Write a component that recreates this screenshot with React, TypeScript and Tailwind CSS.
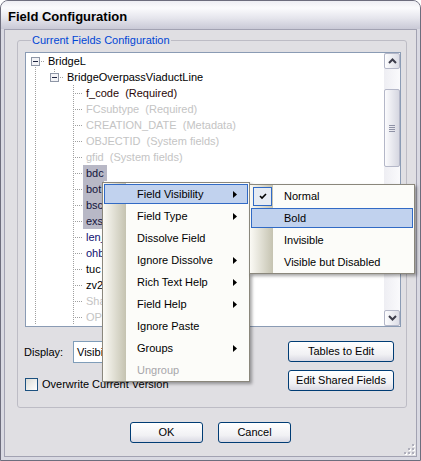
import clsx from "clsx";

type Cell = "none" | "v" | "tee" | "rootBox" | "box";

type TreeRow = {
  cells: Cell[];
  label: string;
  tone?: "plain" | "required" | "muted" | "field";
  selected?: boolean;
  focused?: boolean;
};

const LEAF: Cell[] = ["v", "none", "tee"];

const rows: TreeRow[] = [
  { cells: ["rootBox"], label: "BridgeL" },
  { cells: ["v", "box"], label: "BridgeOverpassViaductLine" },
  { cells: LEAF, label: "f_code  (Required)", tone: "required" },
  { cells: LEAF, label: "FCsubtype  (Required)", tone: "muted" },
  { cells: LEAF, label: "CREATION_DATE  (Metadata)", tone: "muted" },
  { cells: LEAF, label: "OBJECTID  (System fields)", tone: "muted" },
  { cells: LEAF, label: "gfid  (System fields)", tone: "muted" },
  { cells: LEAF, label: "bdc", selected: true },
  { cells: LEAF, label: "bot", selected: true },
  { cells: LEAF, label: "bsc", selected: true },
  { cells: LEAF, label: "exs", selected: true, focused: true },
  { cells: LEAF, label: "len_", tone: "field" },
  { cells: LEAF, label: "ohb", tone: "field" },
  { cells: LEAF, label: "tuc" },
  { cells: LEAF, label: "zv2" },
  { cells: LEAF, label: "Shape", tone: "muted" },
  { cells: LEAF, label: "OPER", tone: "muted" },
];

const toneClass = {
  plain: "text-black",
  required: "text-[#2a0707]",
  muted: "text-[#c4c4c4]",
  field: "text-[#101070]",
};

const menuItems = [
  { label: "Field Visibility", sub: true, active: true },
  { label: "Field Type", sub: true },
  { label: "Dissolve Field" },
  { label: "Ignore Dissolve", sub: true },
  { label: "Rich Text Help", sub: true },
  { label: "Field Help", sub: true },
  { label: "Ignore Paste" },
  { label: "Groups", sub: true },
  { label: "Ungroup", disabled: true },
];

const visibilityItems = [
  { label: "Normal", checked: true },
  { label: "Bold", active: true },
  { label: "Invisible" },
  { label: "Visible but Disabled" },
];

const DOT = { stroke: "#a0a0a0", strokeDasharray: "1 1" };

function Connector({ kind }: { kind: Cell }) {
  return (
    <svg width="19" height="16" className="shrink-0" shapeRendering="crispEdges">
      {(kind === "v" || kind === "tee") && <line x1="9.5" y1="0" x2="9.5" y2="16" {...DOT} />}
      {kind === "tee" && <line x1="11" y1="8.5" x2="19" y2="8.5" {...DOT} />}
      {(kind === "rootBox" || kind === "box") && (
        <>
          {kind === "rootBox" && <line x1="9.5" y1="14" x2="9.5" y2="16" {...DOT} />}
          {kind === "box" && <line x1="9.5" y1="0" x2="9.5" y2="4" {...DOT} />}
          <line x1="15" y1="8.5" x2="19" y2="8.5" {...DOT} />
          <rect x="5.5" y="4.5" width="8" height="8" fill="#f3f3f6" stroke="#8e96a6" />
          <line x1="7" y1="8.5" x2="12" y2="8.5" stroke="#1d2440" />
        </>
      )}
    </svg>
  );
}

function ScrollButton({ up }: { up?: boolean }) {
  return (
    <div className="h-[16px] rounded-[2px] border border-[#b4b7c8] bg-[linear-gradient(to_right,#fdfdfe,#dcdde6)] flex items-center justify-center">
      <svg width="9" height="6">
        <path
          d={up ? "M1 5 L4.5 1.5 L8 5" : "M1 1 L4.5 4.5 L8 1"}
          fill="none"
          stroke="#3c3c4a"
          strokeWidth="2"
        />
      </svg>
    </div>
  );
}

function ScrollBar() {
  return (
    <div className="w-[16px] flex flex-col bg-[linear-gradient(to_right,#eeeef3,#fafafc)]">
      <ScrollButton up />
      <div className="h-[20px]" />
      <div className="h-[78px] rounded-[2px] border border-[#b4b7c8] bg-[linear-gradient(to_right,#fbfbfd,#d6d7e1)] flex flex-col items-center justify-center gap-[1px]">
        <div className="w-[6px] h-px bg-[#8f92a6]" />
        <div className="w-[6px] h-px bg-[#8f92a6]" />
        <div className="w-[6px] h-px bg-[#8f92a6]" />
        <div className="w-[6px] h-px bg-[#8f92a6]" />
      </div>
      <div className="flex-1" />
      <ScrollButton />
    </div>
  );
}

function Tree() {
  return (
    <div className="mt-[5px] h-[275px] border border-[#8a9bb4] bg-white flex">
      <div className="flex-1 overflow-hidden">
        {rows.map((row) => (
          <div key={row.label} className="flex h-[16px]">
            {row.cells.map((c, i) => (
              <Connector key={i} kind={c} />
            ))}
            <span
              className={clsx(
                "h-[16px] leading-[14px] px-[2px] whitespace-pre border",
                row.selected
                  ? "bg-[#b8b8c6] text-[#14143c] border-[#b8b8c6]"
                  : clsx("border-transparent", toneClass[row.tone ?? "plain"]),
                row.focused && "border-dotted border-[#333]",
              )}
            >
              {row.label}
            </span>
          </div>
        ))}
      </div>
      <ScrollBar />
    </div>
  );
}

function XpButton({ children, className }: { children: string; className?: string }) {
  return (
    <div
      className={clsx(
        "h-[21px] rounded-[3px] border border-[#003c74] bg-[linear-gradient(to_bottom,#ffffff,#f1f1f4_65%,#d9d9e3)] flex items-center justify-center text-black",
        className,
      )}
    >
      {children}
    </div>
  );
}

function Arrow() {
  return (
    <svg width="4" height="7" className="shrink-0">
      <path d="M0 0 L4 3.5 L0 7 Z" fill="#000" />
    </svg>
  );
}

function Check() {
  return (
    <svg width="8" height="7">
      <path d="M1 3 L3 5 L7 1" fill="none" stroke="#000" strokeWidth="1.6" />
    </svg>
  );
}

export default function App() {
  return (
    <div className="relative w-[421px] h-[461px] font-['Liberation_Sans',Arial,sans-serif] text-[11px] text-black">
      {/* window frame */}
      <div className="w-full h-full flex flex-col rounded-t-[8px] border border-[#6d6d7d] bg-[#d9d9e2] overflow-hidden">
        <div className="h-[28px] shrink-0 pl-[7px] pt-[3px] flex items-center bg-[linear-gradient(to_bottom,#eeeef3,#fbfbfd_25%,#e6e6ed_60%,#c9c9d6)] text-[13px] font-bold">
          Field Configuration
        </div>
        <div className="relative flex-1 mx-[3px] mb-[3px] border border-[#a2a2b2] bg-[#e0dfe3] flex flex-col">
          <fieldset className="mt-[4px] ml-[12px] mr-[9px] pl-[7px] pr-[5px] pb-[14px] rounded-[3px] border border-[#bdbcc5]">
            <legend className="ml-[6px] px-[1px] leading-[13px] text-[#0046d5]">Current Fields Configuration</legend>
            <Tree />

            <div className="mt-[14px] flex justify-between pr-[7px]">
              <div className="flex flex-col">
                <div className="flex items-center h-[22px]">
                  <span className="w-[49px] -ml-px">Display:</span>
                  <div className="w-[170px] h-[22px] border border-[#7f9db9] bg-white flex items-center pl-[3px]">
                    Visibility
                  </div>
                </div>
                <div className="mt-[13px] flex items-center gap-[4px]">
                  <div className="w-[13px] h-[13px] border border-[#1c5180] bg-[linear-gradient(135deg,#dcdcd7,#ffffff)]" />
                  <span>Overwrite Current Version</span>
                </div>
              </div>
              <div className="w-[106px] flex flex-col gap-[8px]">
                <XpButton>Tables to Edit</XpButton>
                <XpButton>Edit Shared Fields</XpButton>
              </div>
            </div>
          </fieldset>

          <div className="mt-[14px] flex justify-center gap-[15px]">
            <XpButton className="w-[73px]">OK</XpButton>
            <XpButton className="w-[73px]">Cancel</XpButton>
          </div>

          {/* resize grip */}
          <svg width="11" height="11" className="absolute right-[1px] bottom-[1px]">
            {[
              [8, 0],
              [4, 4],
              [8, 4],
              [0, 8],
              [4, 8],
              [8, 8],
            ].map(([x, y]) => (
              <g key={`${x}-${y}`}>
                <rect x={x + 1} y={y + 1} width="2" height="2" fill="#ffffff" />
                <rect x={x} y={y} width="2" height="2" fill="#b0b0bc" />
              </g>
            ))}
          </svg>
        </div>
      </div>

      {/* context menu */}
      <div className="absolute left-[102px] top-[182px] w-[148px] border border-[#8a877c] bg-[linear-gradient(to_right,#fbfaf5,#c5c3b1_23px,#fcfcf9_23px)] shadow-[2px_2px_3px_rgba(0,0,0,0.35)]">
        {menuItems.map((item) => (
          <div key={item.label} className="h-[22px] p-[1px]">
            <div
              className={clsx(
                "h-full flex items-center pl-[32px] pr-[10px] border",
                item.active ? "border-[#316ac5] bg-[#c1d2ee]" : "border-transparent",
                item.disabled ? "text-[#a7a6aa]" : "text-black",
              )}
            >
              <span className="flex-1">{item.label}</span>
              {item.sub && <Arrow />}
            </div>
          </div>
        ))}
      </div>

      {/* Field Visibility submenu */}
      <div className="absolute left-[249px] top-[184px] w-[166px] border border-[#8a877c] bg-[linear-gradient(to_right,#fbfaf5,#c5c3b1_23px,#fcfcf9_23px)] shadow-[2px_2px_3px_rgba(0,0,0,0.35)]">
        {visibilityItems.map((item) => (
          <div key={item.label} className="h-[22px] p-[1px]">
            <div
              className={clsx(
                "h-full flex items-center border",
                item.active ? "border-[#316ac5] bg-[#c1d2ee]" : "border-transparent",
                item.checked ? "pl-[1px]" : "pl-[32px]",
              )}
            >
              {item.checked && (
                <div className="w-[19px] h-[19px] mr-[12px] border border-[#316ac5] bg-[#e6ebf3] flex items-center justify-center">
                  <Check />
                </div>
              )}
              <span>{item.label}</span>
            </div>
          </div>
        ))}
      </div>
    </div>
  );
}
